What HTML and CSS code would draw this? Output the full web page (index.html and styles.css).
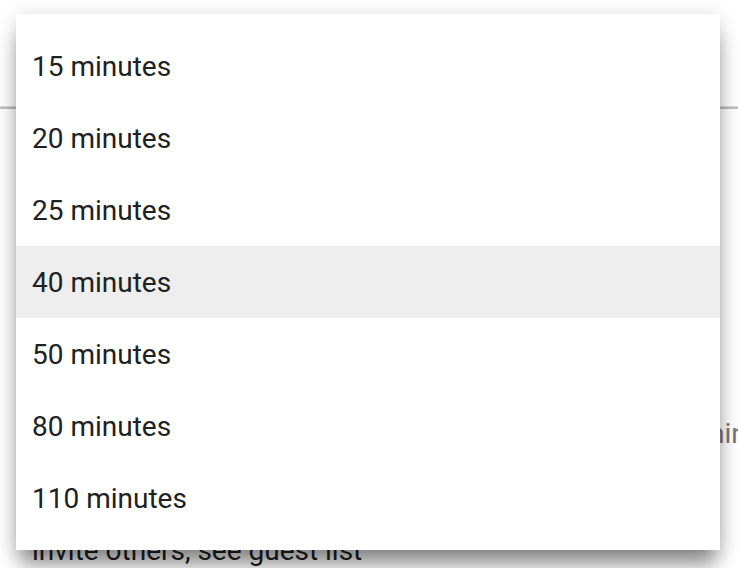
FILE: index.html
```html
<!DOCTYPE html>
<html>
<head>
<meta charset="utf-8">
<link rel="stylesheet" href="styles.css">
</head>
<body>
<div class="page">
  <div class="header"></div>
  <div class="field-row">
    <span class="field-value">min</span>
  </div>
  <div class="guest-row">invite others, see guest list</div>
</div>
<ul class="menu">
  <li class="item">15 minutes</li>
  <li class="item">20 minutes</li>
  <li class="item">25 minutes</li>
  <li class="item selected">40 minutes</li>
  <li class="item">50 minutes</li>
  <li class="item">80 minutes</li>
  <li class="item">110 minutes</li>
</ul>
</body>
</html>
```
FILE: styles.css
```css
html, body {
  margin: 0;
  padding: 0;
  background: #ffffff;
  font-family: Roboto, "Liberation Sans", sans-serif;
  overflow: hidden;
}
.page {
  width: 738px;
  height: 568px;
}
.header {
  height: 106px;
  border-bottom: 1px solid #dcdcdc;
}
.field-row {
  border-top: 2px solid #bdbdbd;
  display: grid;
  grid-template-columns: 700px auto;
  padding-top: 305px;
  height: 40px;
  font-size: 28px;
  line-height: 40px;
  color: #757575;
  white-space: nowrap;
}
.field-value {
  grid-column: 2;
}
.guest-row {
  margin-top: 77px;
  padding-left: 32px;
  font-size: 28px;
  line-height: 40px;
  color: #212121;
  white-space: nowrap;
}
.menu {
  position: absolute;
  top: 14px;
  left: 16px;
  width: 704px;
  margin: 0;
  padding: 16px 0;
  list-style: none;
  background: #ffffff;
  box-shadow: 0 18px 20px -4px rgba(0,0,0,0.45), 0 0 18px rgba(0,0,0,0.12);
}
.item {
  box-sizing: border-box;
  height: 72px;
  padding-top: 2px;
  line-height: 70px;
  padding-left: 16px;
  font-size: 28px;
  color: #212121;
}
.item.selected {
  background: #eeeeee;
}
```
